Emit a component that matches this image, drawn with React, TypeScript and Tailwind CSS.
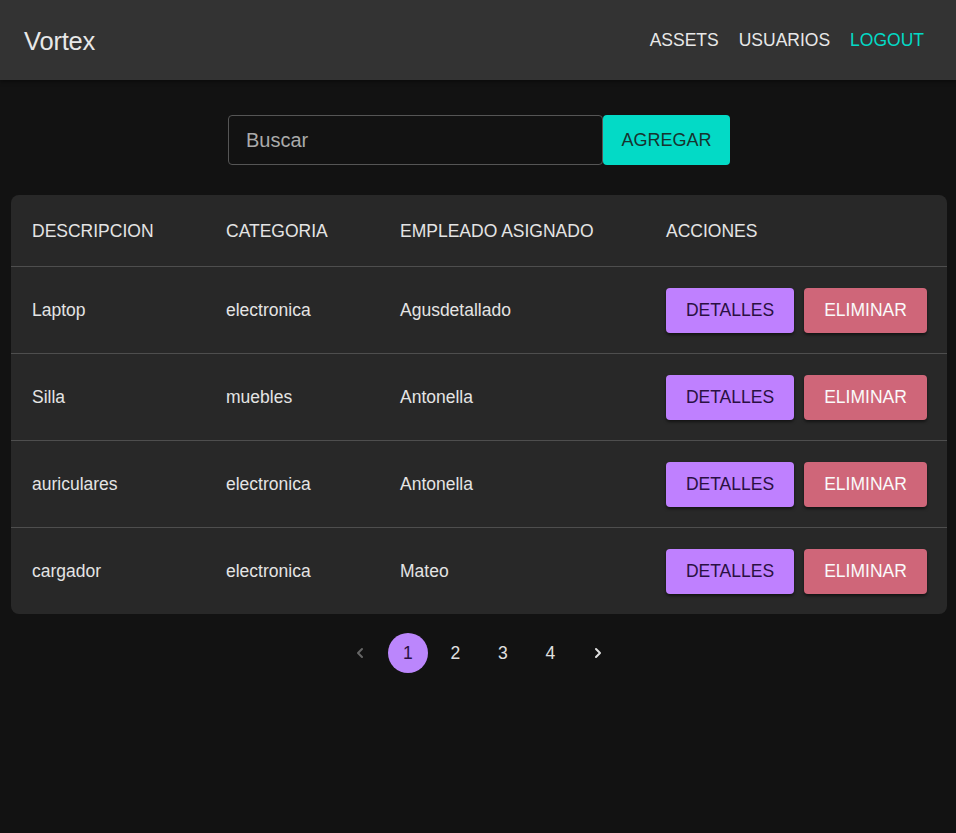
import React from "react";

const rows = [
  { d: "Laptop", c: "electronica", e: "Agusdetallado" },
  { d: "Silla", c: "muebles", e: "Antonella" },
  { d: "auriculares", c: "electronica", e: "Antonella" },
  { d: "cargador", c: "electronica", e: "Mateo" },
];

export default function App() {
  return (
    <div className="min-h-[833px] bg-[#121212] text-[#e0e0e0] font-['Liberation_Sans',Arial,sans-serif]">
      <header className="h-[80px] bg-[#333333] flex items-center justify-between pl-[24px] pr-[32px] shadow-[0_2px_4px_rgba(0,0,0,0.4)]">
        <div className="text-[25.5px] text-[#e8e8e8] tracking-[-0.2px] pt-[2px]">Vortex</div>
        <nav className="flex items-center gap-[20px] text-[17.5px]">
          <span className="text-[#e8e8e8]">ASSETS</span>
          <span className="text-[#e8e8e8]">USUARIOS</span>
          <span className="text-[#03dac6]">LOGOUT</span>
        </nav>
      </header>

      <div className="flex justify-center pt-[35px] pl-[2px]">
        <div className="w-[375px] h-[50px] border border-[#555] rounded-[4px] bg-[#121212] flex items-center pl-[17px] text-[20px] text-[#aaaaaa]">
          Buscar
        </div>
        <button className="w-[127px] h-[50px] rounded-[4px] bg-[#03dac6] text-[#17332f] text-[18px]">
          AGREGAR
        </button>
      </div>

      <div className="ml-[11px] mr-[9px] mt-[30px] bg-[#282828] rounded-[8px] overflow-hidden">
        <div className="grid grid-cols-[194px_174px_266px_1fr] items-center h-[72px] border-b border-[#4e4e4e] pl-[21px] pt-[2px] text-[17.5px] text-[#e4e4e4]">
          <div>DESCRIPCION</div>
          <div>CATEGORIA</div>
          <div>EMPLEADO ASIGNADO</div>
          <div>ACCIONES</div>
        </div>
        {rows.map((r, i) => (
          <div
            key={i}
            className={`grid grid-cols-[194px_174px_266px_1fr] items-center pl-[21px] text-[17.5px] text-[#e4e4e4] ${
              i < rows.length - 1 ? "h-[87px] border-b border-[#4e4e4e]" : "h-[86px]"
            }`}
          >
            <div className="pt-[1px]">{r.d}</div>
            <div className="pt-[1px]">{r.c}</div>
            <div className="pt-[1px]">{r.e}</div>
            <div className="flex gap-[10px]">
              <button className="w-[128px] h-[45px] rounded-[4px] bg-[#bf80ff] text-[#2a1042] text-[17.5px] shadow-[0_2px_3px_rgba(0,0,0,0.5)]">
                DETALLES
              </button>
              <button className="w-[123px] h-[45px] rounded-[4px] bg-[#cf6679] text-[#fafafa] text-[17.5px] shadow-[0_2px_3px_rgba(0,0,0,0.5)]">
                ELIMINAR
              </button>
            </div>
          </div>
        ))}
      </div>

      <div className="flex justify-center items-center mt-[19px] gap-[7.5px] text-[17.5px] pl-[2px]">
        <div className="w-[40px] h-[40px] flex items-center justify-center text-[#666]">
          <svg width="16" height="16" viewBox="0 0 24 24" fill="none" stroke="currentColor" strokeWidth="3" strokeLinecap="round" strokeLinejoin="round">
            <path d="M15 6l-6 6 6 6" />
          </svg>
        </div>
        <div className="w-[40px] h-[40px] rounded-full bg-[#bb86fc] text-[#2a1042] flex items-center justify-center">1</div>
        <div className="w-[40px] h-[40px] flex items-center justify-center">2</div>
        <div className="w-[40px] h-[40px] flex items-center justify-center">3</div>
        <div className="w-[40px] h-[40px] flex items-center justify-center">4</div>
        <div className="w-[40px] h-[40px] flex items-center justify-center text-[#e0e0e0]">
          <svg width="16" height="16" viewBox="0 0 24 24" fill="none" stroke="currentColor" strokeWidth="3" strokeLinecap="round" strokeLinejoin="round">
            <path d="M9 6l6 6-6 6" />
          </svg>
        </div>
      </div>
    </div>
  );
}
